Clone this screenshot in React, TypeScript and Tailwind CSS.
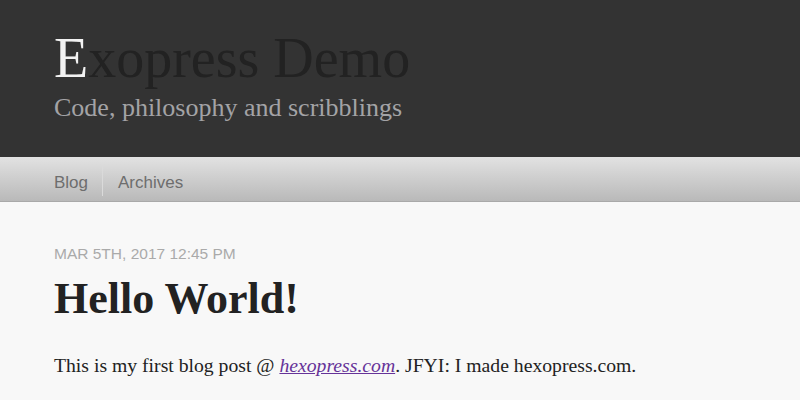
export default function App() {
  return (
    <div className="w-[800px] h-[400px] overflow-hidden bg-[#f8f8f8]" style={{ fontFamily: '"Liberation Serif", serif' }}>
      <header className="bg-[#333333] pl-[54px] pt-[30px] pb-[36px]">
        <h1 className="text-[56px] leading-none font-normal text-[#222222] whitespace-nowrap">
          <span className="text-[#f2f2f2]">E</span>xopress Demo
        </h1>
        <h2 className="mt-[9px] text-[26px] leading-none font-normal text-[#a3a3a6] whitespace-nowrap">
          Code, philosophy and scribblings
        </h2>
      </header>
      <nav
        className="h-[45px] border-b border-[#a9a9a9] bg-gradient-to-b from-[#e2e2e2] to-[#b9b9b9] pl-[54px] flex"
        style={{ fontFamily: '"Liberation Sans", sans-serif' }}
      >
        <div className="pt-[7px] text-[17px] leading-[37px] text-[#6e6e6e] pr-[14px]">Blog</div>
        <div className="mt-[9px] h-[30px] w-px bg-[#dadada]" />
        <div className="pt-[7px] text-[17px] leading-[37px] text-[#6e6e6e] pl-[15px]">Archives</div>
      </nav>
      <main className="pl-[54px]">
        <div
          className="pt-[44px] text-[15.5px] leading-none text-[#aaaaaa] uppercase whitespace-nowrap"
          style={{ fontFamily: '"Liberation Sans", sans-serif' }}
        >
          Mar 5th, 2017 12:45 PM
        </div>
        <h1 className="mt-[15px] text-[44px] leading-none font-bold text-[#222222] whitespace-nowrap">Hello World!</h1>
        <p className="mt-[35px] text-[19.7px] leading-none text-[#222222] whitespace-nowrap">
          This is my first blog post @{' '}
          <a href="#" className="italic underline text-[#663399]">hexopress.com</a>. JFYI: I made hexopress.com.
        </p>
      </main>
    </div>
  );
}
